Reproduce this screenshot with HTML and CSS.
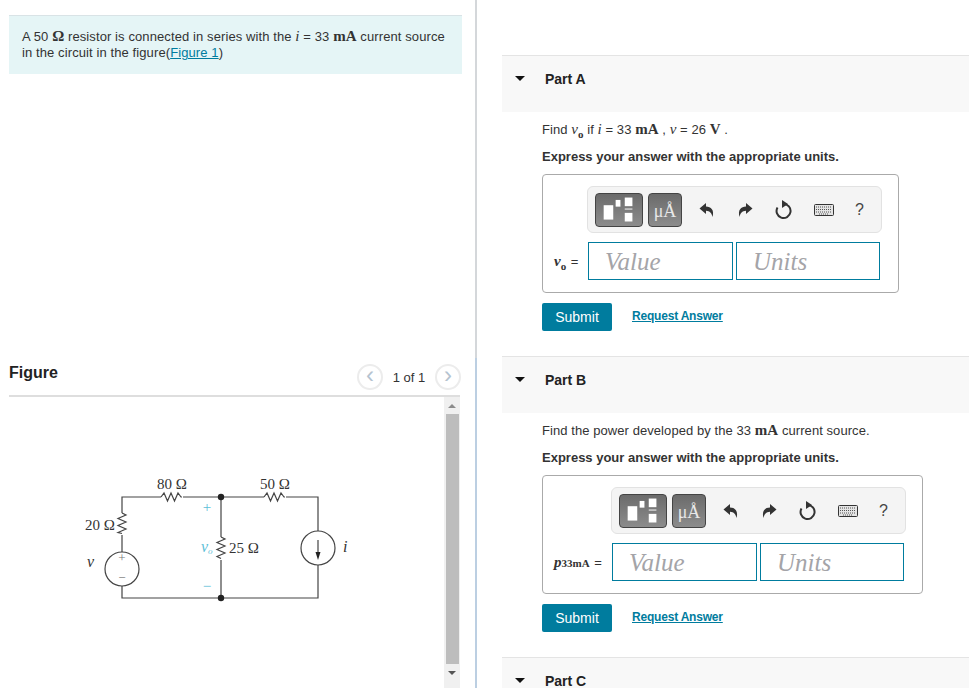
FILE: index.html
```html
<!DOCTYPE html>
<html lang="en">
<head>
    <meta charset="UTF-8">
    <title>Resistor circuit problem</title>
    <link rel="stylesheet" href="styles.css">
</head>
<body>
    <svg class="defs" width="0" height="0">
        <symbol id="undo" viewBox="0 0 16 16"><path d="M0.5 6.5 L7 1 V4.5 C12 4.5 15.5 8 13.5 15 C12.5 11 11 9 7 8.8 V12 Z"/></symbol>
        <symbol id="redo" viewBox="0 0 16 16"><path d="M15.5 6.5 L9 1 V4.5 C4 4.5 0.5 8 2.5 15 C3.5 11 5 9 9 8.8 V12 Z"/></symbol>
        <symbol id="fraction" viewBox="0 0 48 34">
            <rect x="8" y="12" width="10" height="15"/>
            <rect class="hollow" x="20.5" y="6.5" width="5" height="7"/>
            <rect x="30" y="4" width="8" height="9"/>
            <rect x="30" y="15.5" width="8" height="1"/>
            <rect x="30" y="20" width="8" height="9"/>
        </symbol>
        <symbol id="reset" viewBox="0 0 18 20"><path class="ring" d="M9.5 4 A7 7 0 1 1 3.5 7.5"/><path d="M8 0 L14 4 L8 8 Z"/></symbol>
        <symbol id="keyboard" viewBox="0 0 20 12">
            <rect class="kb" x="0.5" y="0.5" width="19" height="11" rx="1"/>
            <path class="keys" d="M2 3 H18 M2 5.5 H18 M2 8 H18 M5 10 H15"/>
        </symbol>
    </svg>

    <div class="page">
        <div class="left">
            <div class="problem">
                <div class="intro">A 50 <span class="unit">Ω</span> resistor is connected in series with the <i class="var">i</i> = 33 <span class="unit">mA</span> current source in the circuit in the figure(<a href="#">Figure 1</a>)</div>
            </div>
            <div class="figure">
                <div class="figure-head">
                    <h2>Figure</h2>
                    <div class="pager">
                        <span class="page-btn">&lsaquo;</span>
                        <span class="page-num">1 of 1</span>
                        <span class="page-btn">&rsaquo;</span>
                    </div>
                </div>
                <div class="figure-body">
                    <div class="figure-view">
                        <!-- circuit drawing -->
                        <svg class="circuit" width="435" height="291" viewBox="0 0 435 291">
                            <g class="wire">
                                <path d="M113 116 V100 H152 M174 100 H255 M277 100 H309 V134 M309 168 V201 H113 V189 M113 155 V138"/>
                                <path d="M212 100 V140 M212 163 V201"/>
                                <path d="M152 100 l3 -4 l3.5 8 l3.5 -8 l3.5 8 l3.5 -8 l3 4 h1"/>
                                <path d="M255 100 l3 -4 l3.5 8 l3.5 -8 l3.5 8 l3.5 -8 l3 4 h1"/>
                                <path d="M113 116 l4 2 l-8 3.5 l8 3.5 l-8 3.5 l8 3.5 l-8 3.5 l4 1"/>
                                <path d="M212 140 l4 2 l-8 3.5 l8 3.5 l-8 3.5 l8 3.5 l-8 3.5 l4 2"/>
                                <circle cx="113" cy="172" r="17"/>
                                <circle cx="309" cy="151" r="17"/>
                                <path d="M309 143 V157"/>
                            </g>
                            <path class="fill" d="M306.5 155 H311.5 L309 163 Z"/>
                            <circle class="fill" cx="212" cy="100" r="3.2"/>
                            <circle class="fill" cx="212" cy="201" r="3.2"/>
                            <text x="148" y="92">80 Ω</text>
                            <text x="251" y="92">50 Ω</text>
                            <text x="76" y="133">20 Ω</text>
                            <text x="220" y="156">25 Ω</text>
                            <text class="ital" x="78" y="170">v</text>
                            <text class="ital" x="334" y="155">i</text>
                            <text class="ital blue" x="192" y="155">v<tspan class="sub" dy="2">o</tspan></text>
                            <text class="blue mid" x="198" y="115">+</text>
                            <text class="blue mid" x="198" y="194">−</text>
                            <text class="small mid" x="113" y="165">+</text>
                            <text class="small mid" x="113" y="185">−</text>
                        </svg>
                    </div>
                    <div class="scrollbar">
                        <span class="arrow-up"></span>
                        <span class="thumb"></span>
                        <span class="arrow-down"></span>
                    </div>
                </div>
            </div>
        </div>

        <div class="right">
            <section class="part">
                <div class="part-head"><span class="caret"></span>Part A</div>
                <div class="part-body">
                    <p class="prompt">Find <i class="var">v</i><sub class="unit">o</sub> if <i class="var">i</i> = 33 <span class="unit">mA</span> , <i class="var">v</i> = 26 <span class="unit">V</span> .</p>
                    <p class="express">Express your answer with the appropriate units.</p>
                    <div class="answer">
                        <div class="toolbar">
                            <span class="tool"><svg width="48" height="34"><use href="#fraction"/></svg></span>
                            <span class="tool tool-unit">μÅ</span>
                            <span class="actions">
                                <svg width="16" height="16"><use href="#undo"/></svg>
                                <svg width="16" height="16"><use href="#redo"/></svg>
                                <svg width="18" height="20"><use href="#reset"/></svg>
                                <svg width="20" height="12"><use href="#keyboard"/></svg>
                                <span class="help">?</span>
                            </span>
                        </div>
                        <div class="symbol"><i class="var">v</i><sub class="unit">o</sub> <span class="equals">=</span></div>
                        <div class="inputs">
                            <span class="field">Value</span>
                            <span class="field">Units</span>
                        </div>
                    </div>
                    <div class="submit-row">
                        <button class="submit" type="button">Submit</button>
                        <a class="request" href="#">Request Answer</a>
                    </div>
                </div>
            </section>

            <section class="part">
                <div class="part-head"><span class="caret"></span>Part B</div>
                <div class="part-body">
                    <p class="prompt">Find the power developed by the 33 <span class="unit">mA</span> current source.</p>
                    <p class="express">Express your answer with the appropriate units.</p>
                    <div class="answer answer-wide">
                        <div class="toolbar">
                            <span class="tool"><svg width="48" height="34"><use href="#fraction"/></svg></span>
                            <span class="tool tool-unit">μÅ</span>
                            <span class="actions">
                                <svg width="16" height="16"><use href="#undo"/></svg>
                                <svg width="16" height="16"><use href="#redo"/></svg>
                                <svg width="18" height="20"><use href="#reset"/></svg>
                                <svg width="20" height="12"><use href="#keyboard"/></svg>
                                <span class="help">?</span>
                            </span>
                        </div>
                        <div class="symbol"><i class="var">p</i><span class="unit sub-inline">33mA</span> <span class="equals">=</span></div>
                        <div class="inputs">
                            <span class="field">Value</span>
                            <span class="field">Units</span>
                        </div>
                    </div>
                    <div class="submit-row">
                        <button class="submit" type="button">Submit</button>
                        <a class="request" href="#">Request Answer</a>
                    </div>
                </div>
            </section>

            <section class="part">
                <div class="part-head"><span class="caret"></span>Part C</div>
            </section>
        </div>
    </div>
</body>
</html>
```

FILE: styles.css
```css
html, body {
    margin: 0;
    padding: 0;
    height: 688px;
    overflow: hidden;
    background: #fff;
    font-family: "Liberation Sans", Arial, sans-serif;
    font-size: 13px;
    color: #333;
}

.defs {
    position: absolute;
}

.page {
    display: flex;
    height: 688px;
}

a {
    color: #007c9e;
}

.left {
    width: 477px;
    flex: none;
}

.problem {
    height: 358px;
    box-sizing: border-box;
    padding: 15px 13px 0 9px;
    border-right: 2px solid #d4d7da;
}

.intro {
    height: 59px;
    box-sizing: border-box;
    padding: 13px 14px 0 13px;
    background: #e5f5f6;
    border-top: 1px solid #d9e3e6;
    line-height: 16px;
    letter-spacing: 0.1px;
}

.unit {
    font-family: "Liberation Serif", serif;
    font-weight: bold;
    font-size: 15px;
    line-height: 0;
}

.var {
    font-family: "Liberation Serif", serif;
    font-style: italic;
    font-size: 15px;
    line-height: 0;
}

.figure {
    height: 330px;
    box-sizing: border-box;
    padding-left: 9px;
    border-right: 2px solid #bccfe2;
}

.figure-head {
    display: flex;
    align-items: center;
    justify-content: space-between;
    width: 451px;
    height: 39px;
    box-sizing: border-box;
    padding-bottom: 7px;
    border-bottom: 2px solid #dedede;
}

.figure-head h2 {
    margin: 0;
    font-size: 16px;
    color: #222;
}

.pager {
    display: flex;
    align-items: center;
    margin-top: 8px;
    margin-right: -1px;
}

.page-btn {
    width: 26px;
    height: 26px;
    box-sizing: border-box;
    border: 2px solid #ececec;
    border-radius: 50%;
    text-align: center;
    font-size: 24px;
    line-height: 18px;
    color: #b5c3d0;
}

.page-num {
    width: 52px;
    text-align: center;
    font-size: 13px;
}

.figure-body {
    display: flex;
    width: 451px;
    height: 291px;
}

.figure-view {
    flex: 1;
}

.circuit {
    display: block;
}

.circuit text {
    font-family: "Liberation Serif", serif;
    font-size: 15px;
    fill: #333;
}

.circuit .ital {
    font-style: italic;
    font-size: 16px;
}

.circuit .mid {
    text-anchor: middle;
}

.circuit .blue {
    fill: #5cc0d8;
}

.circuit .sub {
    font-size: 9px;
}

.circuit .small {
    font-size: 13px;
    fill: #777;
}

.wire {
    fill: none;
    stroke: #444;
    stroke-width: 1.2;
}

.fill {
    fill: #222;
}

.scrollbar {
    display: flex;
    flex-direction: column;
    align-items: center;
    width: 16px;
    background: #f0f0f0;
}

.thumb {
    width: 13px;
    height: 250px;
    background: #bdbdbd;
}

.arrow-up,
.arrow-down {
    width: 0;
    height: 0;
    border-left: 4px solid transparent;
    border-right: 4px solid transparent;
}

.arrow-up {
    margin: 7px 0 6px;
    border-bottom: 4px solid #8c8c8c;
}

.arrow-down {
    margin-top: 7px;
    border-top: 4px solid #555;
}

.right {
    flex: 1;
    padding: 55px 0 0 25px;
}

.part-head {
    display: flex;
    align-items: center;
    height: 57px;
    box-sizing: border-box;
    padding: 0 0 11px 13px;
    background: #f8f8f8;
    border-top: 1px solid #e4e4e4;
    font-size: 14px;
    font-weight: bold;
    color: #222;
}

.caret {
    width: 0;
    height: 0;
    margin-right: 20px;
    border-left: 5.5px solid transparent;
    border-right: 5.5px solid transparent;
    border-top: 5px solid #111;
}

.part-body {
    padding-left: 40px;
    height: 244px;
}

.prompt {
    margin: 0;
    padding-top: 10px;
    line-height: 16px;
    height: 16px;
    letter-spacing: 0.07px;
}

.prompt sub,
.symbol sub {
    font-size: 11px;
    line-height: 0;
}

.express {
    margin: 11px 0 0;
    line-height: 16px;
    font-weight: bold;
}

.answer {
    display: grid;
    grid-template-columns: 33px 295px;
    grid-template-rows: 47px 38px;
    row-gap: 9px;
    width: fit-content;
    margin-top: 9px;
    padding: 11px 16px 12px 11px;
    border: 1px solid #aaa;
    border-radius: 4px;
}

.answer-wide {
    grid-template-columns: 57px 295px;
}

.toolbar {
    grid-column: 2;
    display: flex;
    align-items: center;
    gap: 5px;
    box-sizing: border-box;
    padding-left: 7px;
    background: #f4f4f4;
    border: 1px solid #e2e2e2;
    border-radius: 6px;
}

.tool {
    display: flex;
    align-items: center;
    justify-content: center;
    width: 48px;
    height: 34px;
    box-sizing: border-box;
    background: linear-gradient(#6b6b6b, #8c8c8c);
    border: 1px solid #444;
    border-radius: 4px;
    fill: #fff;
}

.tool .hollow {
    fill: none;
    stroke: #fff;
    stroke-width: 1;
}

.tool-unit {
    width: 34px;
    padding-top: 3px;
    font-family: "Liberation Serif", serif;
    font-size: 18px;
    color: #e8e8e8;
}

.actions {
    display: flex;
    align-items: center;
    flex: 1;
    justify-content: space-between;
    padding: 0 17px 0 12px;
    fill: #333;
}

.ring {
    fill: none;
    stroke: #333;
    stroke-width: 2;
}

.kb {
    fill: #e4e4e4;
    stroke: #333;
}

.keys {
    stroke: #555;
    stroke-width: 1;
    stroke-dasharray: 1 1;
}

.help {
    font-size: 16px;
    color: #444;
}

.symbol {
    grid-column: 1;
    grid-row: 2;
    align-self: center;
    font-size: 13px;
    white-space: nowrap;
}

.symbol .var {
    font-size: 15px;
    font-weight: bold;
}

.sub-inline {
    font-size: 11px;
}

.equals {
    margin-left: 1px;
}

.inputs {
    grid-column: 2;
    grid-row: 2;
    display: flex;
    gap: 3px;
    margin-left: 1px;
}

.field {
    width: 145px;
    box-sizing: border-box;
    padding-left: 16px;
    border: 1px solid #007c9e;
    font-family: "Liberation Serif", serif;
    font-style: italic;
    font-size: 25px;
    line-height: 37px;
    color: #a4a4a8;
}

.field + .field {
    width: 144px;
}

.submit-row {
    display: flex;
    align-items: center;
    margin-top: 10px;
}

.submit {
    width: 70px;
    height: 28px;
    padding: 0;
    background: #007c9e;
    border: none;
    border-radius: 2px;
    color: #fff;
    font-family: inherit;
    font-size: 14px;
}

.request {
    margin-left: 20px;
    margin-top: -3px;
    font-size: 12px;
    font-weight: bold;
    letter-spacing: -0.2px;
}
```
